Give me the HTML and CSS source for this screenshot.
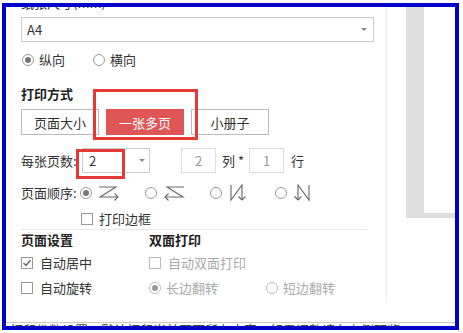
FILE: index.html
```html
<!DOCTYPE html>
<html lang="zh">
<head>
<meta charset="utf-8">
<title>打印设置</title>
<link rel="stylesheet" href="styles.css">
</head>
<body>
<div class="frame">
  <div class="main">
    <div class="left">
      <div class="title">纸张尺寸(mm)</div>
      <div class="select wide"><span>A4</span><i class="caret"></i></div>
      <div class="row radios">
        <div class="opt o1"><span class="radio on"></span><span>纵向</span></div>
        <div class="opt"><span class="radio"></span><span>横向</span></div>
      </div>
      <div class="head">打印方式</div>
      <div class="btns">
        <div class="btn">页面大小</div>
        <div class="btn active">一张多页</div>
        <div class="btn">小册子</div>
      </div>
      <div class="row count">
        <span class="label">每张页数:</span>
        <div class="select small"><span>2</span><i class="caret"></i></div>
        <div class="num n1">2</div>
        <span class="unit">列 *</span>
        <div class="num">1</div>
        <span class="unit2">行</span>
      </div>
      <div class="row order">
        <span class="label">页面顺序:</span>
        <div class="ord"><span class="radio on"></span>
          <svg class="ico" width="22" height="16" viewBox="0 0 22 16"><polyline points="1,2 18,2 2,12 20,12" /><polyline points="16.5,8.5 20,12 16.5,15.5" /></svg>
        </div>
        <div class="ord"><span class="radio"></span>
          <svg class="ico" width="22" height="16" viewBox="0 0 22 16"><polyline points="21,2 4,2 20,12 2,12" /><polyline points="5.5,8.5 2,12 5.5,15.5" /></svg>
        </div>
        <div class="ord"><span class="radio"></span>
          <svg class="ico" width="20" height="18" viewBox="0 0 20 18"><polyline points="3,1 3,16 14,1 14,16" /><polyline points="10.5,12.5 14,16 17.5,12.5" /></svg>
        </div>
        <div class="ord"><span class="radio"></span>
          <svg class="ico" width="20" height="18" viewBox="0 0 20 18"><polyline points="16,1 16,16 5,1 5,16" /><polyline points="1.5,12.5 5,16 8.5,12.5" /></svg>
        </div>
      </div>
      <div class="row border-opt">
        <span class="check"></span><span class="ctext">打印边框</span>
      </div>
      <div class="sep"></div>
      <div class="grid">
        <div class="head2">页面设置</div>
        <div class="head2">双面打印</div>
        <div class="cell r1"><span class="check on"><svg width="10" height="10" viewBox="0 0 10 10"><polyline points="1.5,5 4,7.5 8.5,2" /></svg></span><span class="ctext">自动居中</span></div>
        <div class="cell r1 dis"><span class="check"></span><span class="ctext">自动双面打印</span></div>
        <div class="cell r2"><span class="check"></span><span class="ctext">自动旋转</span></div>
        <div class="cell r2 dis">
          <div class="side"><span class="radio on"></span><span class="ctext">长边翻转</span></div>
          <div class="side"><span class="radio"></span><span class="ctext">短边翻转</span></div>
        </div>
      </div>
      <div class="mark mark1"></div>
      <div class="mark mark2"></div>
    </div>
    <div class="divider"></div>
    <div class="preview"><div class="page"></div></div>
  </div>
  <div class="footer">打印份数设置　默认打印当前页面所有内容，如需调整请在右侧预览</div>
</div>
</body>
</html>
```

FILE: styles.css
```css
* { box-sizing: border-box; }
html, body { margin: 0; padding: 0; background: #fff; }
body {
  font-family: "Noto Sans CJK SC", "Microsoft YaHei", sans-serif;
  font-size: 13px;
  color: #333;
  width: 463px;
  height: 333px;
  overflow: hidden;
}
.frame {
  margin: 3px 0 0 2px;
  width: 457px;
  height: 327px;
  border: 4px solid #0000cc;
  overflow: hidden;
  background: #fff;
}
.main {
  display: flex;
  height: 316px;
}
.left {
  position: relative;
  width: 380px;
  padding-left: 15px;
  display: flex;
  flex-direction: column;
}
.title {
  height: 14px;
  line-height: 14px;
  margin-top: -11px;
  margin-bottom: 2px;
  color: #333;
}
.select {
  display: flex;
  align-items: center;
  justify-content: space-between;
  border: 1px solid #ccc;
  height: 25px;
  background: #fff;
  line-height: 16px;
}
.select.wide { width: 353px; margin-top: 5px; padding: 0 6px 0 5px; }
.select.small { width: 68px; padding: 0 4px 0 6px; margin-left: 3px; }
.caret {
  width: 0; height: 0;
  border-left: 3px solid transparent;
  border-right: 3px solid transparent;
  border-top: 3px solid #888;
}
.row { display: flex; align-items: center; line-height: 16px; }
.radios { margin-top: 12px; height: 12px; padding-left: 1px; }
.opt { display: flex; align-items: center; }
.opt.o1 { width: 71px; }
.opt .radio { margin-right: 5px; }
.radio {
  flex: none;
  width: 12px; height: 12px;
  border: 1px solid #999;
  border-radius: 50%;
  display: inline-flex;
  align-items: center;
  justify-content: center;
  background: #fff;
}
.radio.on::after {
  content: "";
  width: 6px; height: 6px;
  border-radius: 50%;
  background: #777;
}
.head {
  margin-top: 20px;
  height: 16px;
  line-height: 16px;
  font-weight: bold;
  color: #222;
}
.btns { display: flex; gap: 7px; margin-top: 7px; }
.btn {
  width: 78px; height: 26px;
  border: 1px solid #bbb;
  display: flex; align-items: center; justify-content: center;
  color: #333;
  background: #fff;
}
.btn.active { background: #e05656; border-color: #e05656; color: #fff; }
.count { margin-top: 13px; height: 25px; }
.label { width: 58px; flex: none; color: #333; }
.num {
  width: 35px; height: 25px;
  border: 1px solid #ddd;
  display: flex; align-items: center; justify-content: center;
  color: #999;
}
.num.n1 { margin-left: 31px; }
.unit { margin-left: 6px; width: 27px; }
.unit2 { margin-left: 7px; }
.order { margin-top: 12px; height: 16px; }
.order .label { width: 59px; }
.ord { display: flex; align-items: center; width: 65px; }
.ord .radio { margin-right: 6px; }
.ico { fill: none; stroke: #666; stroke-width: 1.1; stroke-linejoin: miter; }
.border-opt { margin-top: 11px; height: 14px; padding-left: 60px; }
.check {
  flex: none;
  width: 12px; height: 12px;
  border: 1px solid #999;
  background: #fff;
  display: inline-flex; align-items: center; justify-content: center;
}
.check svg { fill: none; stroke: #666; stroke-width: 1.4; }
.ctext { margin-left: 6px; }
.sep { margin-top: 3px; width: 346px; height: 1px; background: #e8e8e8; }
.grid {
  display: grid;
  grid-template-columns: 128px auto;
  margin-top: 2px;
  line-height: 16px;
}
.head2 { height: 16px; font-weight: bold; color: #222; }
.cell { display: flex; align-items: center; height: 16px; }
.cell.r1 { margin-top: 7px; }
.cell.r2 { margin-top: 9px; }
.cell .ctext { margin-left: 7px; }
.dis { color: #aaa; }
.dis .check, .dis .radio { border-color: #bbb; }
.dis .radio.on::after { background: #999; }
.side { display: flex; align-items: center; width: 117px; }
.side .ctext { margin-left: 5px; }
.mark {
  position: absolute;
  border: 3px solid #e53935;
  pointer-events: none;
}
.mark1 { left: 87px; top: 82px; width: 105px; height: 51px; }
.mark2 { left: 70px; top: 142px; width: 49px; height: 30px; }
.divider { width: 1px; height: 295px; background: #eee; flex: none; }
.preview {
  margin-left: 19px;
  width: 49px;
  height: 211px;
  background: #dedede;
  padding: 0 0 5px 18px;
  flex: none;
}
.page { width: 100%; height: 100%; background: #fff; }
.footer {
  border-top: 1px solid #c8c8c0;
  padding-left: 4px;
  line-height: 14px;
  margin-top: -1px;
  color: #444;
  white-space: nowrap;
}
```
